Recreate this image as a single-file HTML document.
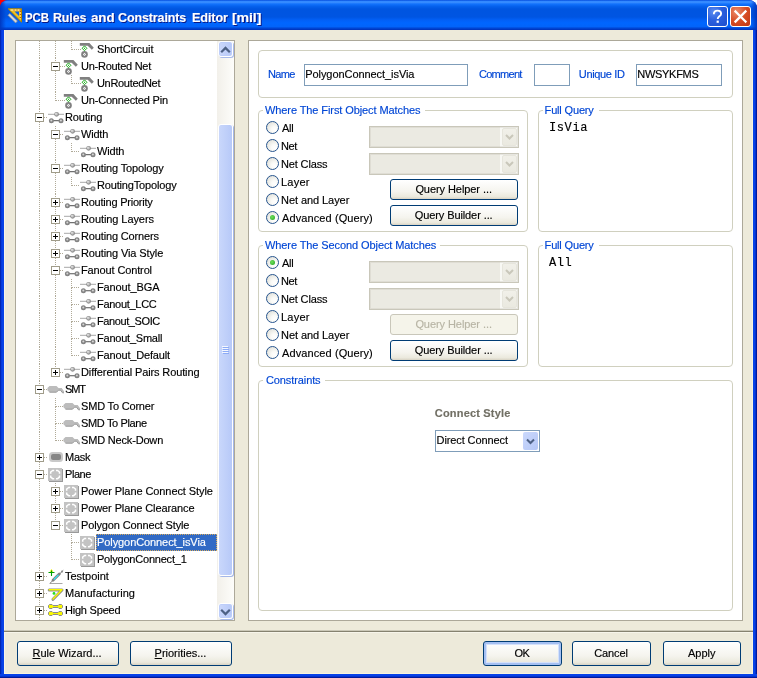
<!DOCTYPE html>
<html><head><meta charset="utf-8"><title>PCB Rules and Constraints Editor [mil]</title>
<style>
*{box-sizing:border-box;margin:0;padding:0}
html,body{width:757px;height:678px;overflow:hidden;background:#fff}
body{font:11px "Liberation Sans",sans-serif;letter-spacing:-0.12px;color:#000;position:relative;-webkit-text-stroke:0.15px currentColor}
i,b,u,s,em{font-style:normal;font-weight:normal;text-decoration:none;display:block;position:absolute}
#win{position:absolute;left:0;top:0;width:757px;height:678px;background:linear-gradient(to right,#00189c 0,#0434cc 1px,#0540ea 2px,#0843e6 3.5px,#0843e6 753.5px,#0540ea 755px,#0434cc 755.5px,#00189c 756.5px);border-radius:8px 8px 0 0;overflow:hidden;will-change:transform}
#bot{position:absolute;left:0;top:674px;width:757px;height:4px;background:linear-gradient(to bottom,#0843e6 0,#0540ea 1.5px,#0434cc 2.500px,#00189c 3.500px)}
#cornerL{position:absolute;left:0;top:0;width:8px;height:8px;background:#f00}
#title{position:absolute;left:0;top:0;width:757px;height:30px;border-radius:8px 8px 0 0;
background:linear-gradient(to bottom,#0046d9 0,#2f86ff 1.2px,#3c8fff 2.2px,#1272fc 4px,#0560ec 6.5px,#0055e0 9px,#0055e2 17px,#0260f6 20px,#0066ff 23px,#0264fa 26.5px,#0048d6 28.2px,#0035be 29.6px)}
#title:before{content:"";position:absolute;left:0;top:0;bottom:0;width:6px;background:linear-gradient(to right,#0038c0,rgba(0,56,192,0))}
#title:after{content:"";position:absolute;right:0;top:0;bottom:0;width:6px;background:linear-gradient(to left,#0038c0,rgba(0,56,192,0))}
.tt{position:absolute;font:bold 13px "Liberation Sans",sans-serif;color:#fff;text-shadow:1px 1px 0 #0a1883;white-space:nowrap}
#body{position:absolute;left:4px;top:30px;width:749px;height:644px;background:#edeada}
.tb{position:absolute;top:6px;width:21px;height:21px;border:1px solid #fff;border-radius:3px}
#help{left:707px;background:radial-gradient(circle at 30% 25%,#5c8cf0 0%,#2a5fde 45%,#1c4dcc 100%)}
#close{left:730px;background:radial-gradient(circle at 30% 25%,#ec8c6c 0%,#d64c24 50%,#bf3513 100%)}
.box{position:absolute;background:#fff;border:1px solid #aca899}
#tree{left:15px;top:40px;width:220px;height:581px;overflow:hidden}
#tin{position:absolute;left:0;top:0;width:201px;height:579px;overflow:hidden}
#right{left:248px;top:40px;width:495px;height:581px}
.v{width:1px;background:repeating-linear-gradient(to bottom,#b0aa98 0,#b0aa98 1px,transparent 1px,transparent 2px)}
.h{height:1px;background:repeating-linear-gradient(to right,#b0aa98 0,#b0aa98 1px,transparent 1px,transparent 2px)}
.bx{width:9px;height:9px;border:1px solid #a09c8a;background:#fff}
.bx u{left:1px;top:3px;width:5px;height:1px;background:#000}
.bx s{left:3px;top:1px;width:1px;height:5px;background:#000}
.ico{position:absolute;width:17px;height:17px}
.ic{display:block}
.t{position:absolute;height:17px;line-height:16px;white-space:nowrap}
.sel{background:#316ac5;color:#fff;padding-left:1px;outline:1px dotted #d6a95c;outline-offset:-1px}
#sb{position:absolute;left:201px;top:0;width:17px;height:579px;background:linear-gradient(to right,#f2f0ea,#fdfdfa)}
.sbb{position:absolute;left:1px;width:15px;height:16px;border:1px solid #fff;border-radius:3px;background:linear-gradient(to right,#cbd8fc,#b6c8f7);box-shadow:inset 0 0 0 1px #bccdfa,1px 1px 0 #a9bbea}
.sbb svg{position:absolute;left:1px;top:4px}
#thumb{position:absolute;left:1px;top:83px;width:15px;height:452px;border:1px solid #fff;border-radius:3px;background:linear-gradient(to right,#c9d7fb,#b7c9f8);box-shadow:1px 1px 0 #a4b7e8}
#grip{position:absolute;left:3px;top:221px;width:6px;height:8px;background:repeating-linear-gradient(to bottom,#f4f7ff 0,#f4f7ff 1px,transparent 1px,transparent 2px)}
#grip2{position:absolute;left:4px;top:222px;width:6px;height:8px;background:repeating-linear-gradient(to bottom,#8cabf6 0,#8cabf6 1px,transparent 1px,transparent 2px)}
.grp{position:absolute;border:1px solid #d0d0bf;border-radius:4px}
.gl{position:absolute;color:#0046d5;background:#fff;padding:0 3px 0 2px;height:14px;line-height:14px;white-space:nowrap}
.gm{position:absolute;height:1px;background:#fff}
.bl{position:absolute;color:#0046d5;white-space:nowrap;line-height:14px}
.inp{position:absolute;height:22px;border:1px solid #7f9db9;background:#fff;line-height:19px;padding-left:2px;white-space:nowrap}
.rd{position:absolute;width:13px;height:13px;border-radius:50%;border:1px solid #26548e;background:radial-gradient(circle at 70% 70%,#ffffff 0%,#fafaf7 30%,#d9d9d1 100%)}
.rd em{left:3px;top:3px;width:5px;height:5px;border-radius:50%;background:radial-gradient(circle at 40% 40%,#6fe05a,#21a121)}
.lb{position:absolute;line-height:15px;white-space:nowrap}
.cbd{position:absolute;width:150px;height:22px;border:1px solid #c9c7ba;box-shadow:inset 0 0 0 1px rgba(201,199,186,.35);background:linear-gradient(to right,#ebeae2 0,#ebeae2 130px,#f8f8f4 130px)}
.cbb{position:absolute;right:1px;top:1px;width:15px;height:18px;border:1px solid #e6e5dc;border-radius:2px;background:linear-gradient(to bottom,#f1f0e9,#eae9e0)}
.cbb svg{position:absolute;left:2px;top:5px}
.btn{position:absolute;border:1px solid #003c74;border-radius:3px;background:linear-gradient(to bottom,#ffffff 0%,#f5f4ee 60%,#ebe9dd 88%,#d8d3c4 100%);text-align:center;line-height:17px;white-space:nowrap;box-sizing:content-box}
.btn.dis{border-color:#c9c7ba;background:#f5f4ea;color:#b8b5a5}
.btn.def{box-shadow:inset 0 0 0 2px #a5c0f2,inset 0 0 0 3px #d4e1fb}
.mono{position:absolute;font:12px "Liberation Mono",monospace;letter-spacing:0.6px;line-height:15px;white-space:nowrap}
#sep{position:absolute;left:4px;top:630px;width:749px;height:3px;background:linear-gradient(to bottom,#cbc8b7 0,#cbc8b7 1px,#85826f 1px,#85826f 2px,#f7f5ea 2px)}
</style></head><body>
<div id="cornerL"></div>
<div id="win">
<div id="title"></div>
<div id="bot"></div>
<svg style="position:absolute;left:7px;top:8px" width="16" height="16" viewBox="0 0 16 16"><path d="M1.200 .800h13.300v13.300z" fill="#f0c020" stroke="#b08800" stroke-width="1"/><path d="M7.500 3.500h4.500v4.500z" fill="#0b5fe8"/><path d="M3.500 2h9.500" stroke="#fff6c0" stroke-width="1"/><path d="M13.300 3v8" stroke="#ffe060" stroke-width="1"/><path d="M6.500 2h7M13.300 3v9" stroke="#a03010" stroke-width="1" stroke-dasharray="1 2"/><path d="M1 7.300l1.800-1.800 7.600 7.600-1.800 1.800z" fill="#d8d8d8" stroke="#909090" stroke-width=".7"/></svg>
<span class="tt" style="left:24.52px;top:9.5px;transform:scaleX(0.8808);transform-origin:0 0;">PCB</span> <span class="tt" style="left:52.94px;top:9.5px;transform:scaleX(0.9559);transform-origin:0 0;">Rules</span> <span class="tt" style="left:90.6px;top:9.5px;transform:scaleX(1.0318);transform-origin:0 0;">and</span> <span class="tt" style="left:118.0px;top:9.5px;transform:scaleX(0.9611);transform-origin:0 0;">Constraints</span> <span class="tt" style="left:191.53px;top:9.5px;transform:scaleX(0.975);transform-origin:0 0;">Editor</span> <span class="tt" style="left:232.31px;top:9.5px;transform:scaleX(1.0885);transform-origin:0 0;">[mil]</span>
<div class="tb" id="help"><svg width="19" height="19" viewBox="0 0 19 19"><path d="M5.800 7.200c0-2.400 1.600-3.600 3.700-3.600s3.600 1.200 3.600 3.100c0 2.600-3.400 2.700-3.400 5.300" fill="none" stroke="#fff" stroke-width="1.900"/><rect x="8.600" y="13.600" width="2.200" height="2.200" fill="#fff"/></svg></div>
<div class="tb" id="close"><svg width="19" height="19" viewBox="0 0 19 19"><path d="M4.500 4.500l10 10M14.500 4.500l-10 10" stroke="#fff" stroke-width="2.300" stroke-linecap="square"/></svg></div>
<div id="body"></div>
<div style="position:absolute;left:4px;top:30px;width:1px;height:644px;background:#f6f4ea"></div>
<div style="position:absolute;left:752px;top:30px;width:1px;height:644px;background:#f7f4de"></div>
<div style="position:absolute;left:4px;top:673px;width:749px;height:1px;background:#f7f4de"></div>

<div class="box" id="tree"><div id="tin">
<i class="v" style="left:23px;top:0px;height:17px"></i>
<i class="v" style="left:39px;top:0px;height:17px"></i>
<i class="v" style="left:55px;top:0px;height:9px"></i>
<i class="h" style="left:56px;top:8px;width:9px"></i>
<span class="ico" style="left:63px;top:0px"><svg class="ic" width="16" height="17" viewBox="0 0 16 17"><path d="M.8 2H10.4L14.8 6.700 12.800 8.750 8.700 4.700H.8z" fill="#808080"/><circle cx="5.500" cy="13.400" r="3.300" fill="#808080"/><path d="M5.500 11.800l1.600 1.600-1.600 1.600-1.600-1.600z" fill="#fff"/><rect x="5" y="12.900" width="1" height="1" fill="#a0a0a0"/><path d="M5.500 4.900l2.400 2.400-2.400 2.400-2.400-2.400z" fill="#fff" stroke="#00a000" stroke-width=".9"/><rect x="5" y="6.800" width="1" height="1" fill="#00a000"/></svg></span>
<span class="t" style="left:81px;top:0px;letter-spacing:-0.091px">ShortCircuit</span>
<i class="v" style="left:23px;top:17px;height:17px"></i>
<i class="v" style="left:39px;top:17px;height:9px"></i>
<i class="v" style="left:39px;top:26px;height:8px"></i>
<i class="h" style="left:40px;top:25px;width:9px"></i>
<b class="bx" style="left:35px;top:21px"><u></u></b>
<span class="ico" style="left:47px;top:17px"><svg class="ic" width="16" height="17" viewBox="0 0 16 17"><path d="M.8 2H10.4L14.8 6.700 12.800 8.750 8.700 4.700H.8z" fill="#808080"/><circle cx="5.500" cy="13.400" r="3.300" fill="#808080"/><path d="M5.500 11.800l1.600 1.600-1.600 1.600-1.600-1.600z" fill="#fff"/><rect x="5" y="12.900" width="1" height="1" fill="#a0a0a0"/><path d="M5.500 4.900l2.400 2.400-2.400 2.400-2.400-2.400z" fill="#fff" stroke="#00a000" stroke-width=".9"/><rect x="5" y="6.800" width="1" height="1" fill="#00a000"/></svg></span>
<span class="t" style="left:65px;top:17px;letter-spacing:-0.258px">Un-Routed Net</span>
<i class="v" style="left:23px;top:34px;height:17px"></i>
<i class="v" style="left:39px;top:34px;height:17px"></i>
<i class="v" style="left:55px;top:34px;height:9px"></i>
<i class="h" style="left:56px;top:42px;width:9px"></i>
<span class="ico" style="left:63px;top:34px"><svg class="ic" width="16" height="17" viewBox="0 0 16 17"><path d="M.8 2H10.4L14.8 6.700 12.800 8.750 8.700 4.700H.8z" fill="#808080"/><circle cx="5.500" cy="13.400" r="3.300" fill="#808080"/><path d="M5.500 11.800l1.600 1.600-1.600 1.600-1.600-1.600z" fill="#fff"/><rect x="5" y="12.900" width="1" height="1" fill="#a0a0a0"/><path d="M5.500 4.900l2.400 2.400-2.400 2.400-2.400-2.400z" fill="#fff" stroke="#00a000" stroke-width=".9"/><rect x="5" y="6.800" width="1" height="1" fill="#00a000"/></svg></span>
<span class="t" style="left:81px;top:34px;letter-spacing:-0.32px">UnRoutedNet</span>
<i class="v" style="left:23px;top:51px;height:17px"></i>
<i class="v" style="left:39px;top:51px;height:9px"></i>
<i class="h" style="left:40px;top:59px;width:9px"></i>
<span class="ico" style="left:47px;top:51px"><svg class="ic" width="16" height="17" viewBox="0 0 16 17"><path d="M.8 2H10.4L14.8 6.700 12.800 8.750 8.700 4.700H.8z" fill="#808080"/><circle cx="5.500" cy="13.400" r="3.300" fill="#808080"/><path d="M5.500 11.800l1.600 1.600-1.600 1.600-1.600-1.600z" fill="#fff"/><rect x="5" y="12.900" width="1" height="1" fill="#a0a0a0"/><path d="M5.500 4.900l2.400 2.400-2.400 2.400-2.400-2.400z" fill="#fff" stroke="#00a000" stroke-width=".9"/><rect x="5" y="6.800" width="1" height="1" fill="#00a000"/></svg></span>
<span class="t" style="left:65px;top:51px;letter-spacing:-0.187px">Un-Connected Pin</span>
<i class="v" style="left:23px;top:68px;height:9px"></i>
<i class="v" style="left:23px;top:77px;height:8px"></i>
<i class="h" style="left:24px;top:76px;width:7px"></i>
<b class="bx" style="left:19px;top:72px"><u></u></b>
<span class="ico" style="left:31px;top:68px"><svg class="ic" width="17" height="17" viewBox="0 0 17 17"><path d="M1 5.300h16" stroke="#a8a8a8" stroke-width="1"/><circle cx="9.600" cy="5.300" r="2.400" fill="#909090"/><circle cx="9.300" cy="5" r="1.500" fill="#c4c4c4"/><circle cx="9" cy="4.700" r=".7" fill="#e4e4e4"/><path d="M4 11.700h10" stroke="#707070" stroke-width="1.200"/><circle cx="4.400" cy="11.700" r="2.500" fill="#848484"/><circle cx="4.300" cy="11.600" r="1" fill="#d4d4d4"/><circle cx="14" cy="11.700" r="2.500" fill="#848484"/><circle cx="13.900" cy="11.600" r="1" fill="#d4d4d4"/></svg></span>
<span class="t" style="left:49px;top:68px;letter-spacing:-0.1px">Routing</span>
<i class="v" style="left:23px;top:85px;height:17px"></i>
<i class="v" style="left:39px;top:85px;height:9px"></i>
<i class="v" style="left:39px;top:94px;height:8px"></i>
<i class="h" style="left:40px;top:93px;width:7px"></i>
<b class="bx" style="left:35px;top:89px"><u></u></b>
<span class="ico" style="left:47px;top:85px"><svg class="ic" width="17" height="17" viewBox="0 0 17 17"><path d="M1 5.300h16" stroke="#a8a8a8" stroke-width="1"/><circle cx="9.600" cy="5.300" r="2.400" fill="#909090"/><circle cx="9.300" cy="5" r="1.500" fill="#c4c4c4"/><circle cx="9" cy="4.700" r=".7" fill="#e4e4e4"/><path d="M4 11.700h10" stroke="#707070" stroke-width="1.200"/><circle cx="4.400" cy="11.700" r="2.500" fill="#848484"/><circle cx="4.300" cy="11.600" r="1" fill="#d4d4d4"/><circle cx="14" cy="11.700" r="2.500" fill="#848484"/><circle cx="13.900" cy="11.600" r="1" fill="#d4d4d4"/></svg></span>
<span class="t" style="left:65px;top:85px;letter-spacing:-0.2px">Width</span>
<i class="v" style="left:23px;top:102px;height:17px"></i>
<i class="v" style="left:39px;top:102px;height:17px"></i>
<i class="v" style="left:55px;top:102px;height:9px"></i>
<i class="h" style="left:56px;top:110px;width:7px"></i>
<span class="ico" style="left:63px;top:102px"><svg class="ic" width="17" height="17" viewBox="0 0 17 17"><path d="M1 5.300h16" stroke="#a8a8a8" stroke-width="1"/><circle cx="9.600" cy="5.300" r="2.400" fill="#909090"/><circle cx="9.300" cy="5" r="1.500" fill="#c4c4c4"/><circle cx="9" cy="4.700" r=".7" fill="#e4e4e4"/><path d="M4 11.700h10" stroke="#707070" stroke-width="1.200"/><circle cx="4.400" cy="11.700" r="2.500" fill="#848484"/><circle cx="4.300" cy="11.600" r="1" fill="#d4d4d4"/><circle cx="14" cy="11.700" r="2.500" fill="#848484"/><circle cx="13.900" cy="11.600" r="1" fill="#d4d4d4"/></svg></span>
<span class="t" style="left:81px;top:102px;letter-spacing:-0.175px">Width</span>
<i class="v" style="left:23px;top:119px;height:17px"></i>
<i class="v" style="left:39px;top:119px;height:9px"></i>
<i class="v" style="left:39px;top:128px;height:8px"></i>
<i class="h" style="left:40px;top:127px;width:7px"></i>
<b class="bx" style="left:35px;top:123px"><u></u></b>
<span class="ico" style="left:47px;top:119px"><svg class="ic" width="17" height="17" viewBox="0 0 17 17"><path d="M1 5.300h16" stroke="#a8a8a8" stroke-width="1"/><circle cx="9.600" cy="5.300" r="2.400" fill="#909090"/><circle cx="9.300" cy="5" r="1.500" fill="#c4c4c4"/><circle cx="9" cy="4.700" r=".7" fill="#e4e4e4"/><path d="M4 11.700h10" stroke="#707070" stroke-width="1.200"/><circle cx="4.400" cy="11.700" r="2.500" fill="#848484"/><circle cx="4.300" cy="11.600" r="1" fill="#d4d4d4"/><circle cx="14" cy="11.700" r="2.500" fill="#848484"/><circle cx="13.900" cy="11.600" r="1" fill="#d4d4d4"/></svg></span>
<span class="t" style="left:65px;top:119px;letter-spacing:-0.133px">Routing Topology</span>
<i class="v" style="left:23px;top:136px;height:17px"></i>
<i class="v" style="left:39px;top:136px;height:17px"></i>
<i class="v" style="left:55px;top:136px;height:9px"></i>
<i class="h" style="left:56px;top:144px;width:7px"></i>
<span class="ico" style="left:63px;top:136px"><svg class="ic" width="17" height="17" viewBox="0 0 17 17"><path d="M1 5.300h16" stroke="#a8a8a8" stroke-width="1"/><circle cx="9.600" cy="5.300" r="2.400" fill="#909090"/><circle cx="9.300" cy="5" r="1.500" fill="#c4c4c4"/><circle cx="9" cy="4.700" r=".7" fill="#e4e4e4"/><path d="M4 11.700h10" stroke="#707070" stroke-width="1.200"/><circle cx="4.400" cy="11.700" r="2.500" fill="#848484"/><circle cx="4.300" cy="11.600" r="1" fill="#d4d4d4"/><circle cx="14" cy="11.700" r="2.500" fill="#848484"/><circle cx="13.900" cy="11.600" r="1" fill="#d4d4d4"/></svg></span>
<span class="t" style="left:81px;top:136px;letter-spacing:-0.164px">RoutingTopology</span>
<i class="v" style="left:23px;top:153px;height:17px"></i>
<i class="v" style="left:39px;top:153px;height:9px"></i>
<i class="v" style="left:39px;top:162px;height:8px"></i>
<i class="h" style="left:40px;top:161px;width:7px"></i>
<b class="bx" style="left:35px;top:157px"><u></u><s></s></b>
<span class="ico" style="left:47px;top:153px"><svg class="ic" width="17" height="17" viewBox="0 0 17 17"><path d="M1 5.300h16" stroke="#a8a8a8" stroke-width="1"/><circle cx="9.600" cy="5.300" r="2.400" fill="#909090"/><circle cx="9.300" cy="5" r="1.500" fill="#c4c4c4"/><circle cx="9" cy="4.700" r=".7" fill="#e4e4e4"/><path d="M4 11.700h10" stroke="#707070" stroke-width="1.200"/><circle cx="4.400" cy="11.700" r="2.500" fill="#848484"/><circle cx="4.300" cy="11.600" r="1" fill="#d4d4d4"/><circle cx="14" cy="11.700" r="2.500" fill="#848484"/><circle cx="13.900" cy="11.600" r="1" fill="#d4d4d4"/></svg></span>
<span class="t" style="left:65px;top:153px;letter-spacing:-0.227px">Routing Priority</span>
<i class="v" style="left:23px;top:170px;height:17px"></i>
<i class="v" style="left:39px;top:170px;height:9px"></i>
<i class="v" style="left:39px;top:179px;height:8px"></i>
<i class="h" style="left:40px;top:178px;width:7px"></i>
<b class="bx" style="left:35px;top:174px"><u></u><s></s></b>
<span class="ico" style="left:47px;top:170px"><svg class="ic" width="17" height="17" viewBox="0 0 17 17"><path d="M1 5.300h16" stroke="#a8a8a8" stroke-width="1"/><circle cx="9.600" cy="5.300" r="2.400" fill="#909090"/><circle cx="9.300" cy="5" r="1.500" fill="#c4c4c4"/><circle cx="9" cy="4.700" r=".7" fill="#e4e4e4"/><path d="M4 11.700h10" stroke="#707070" stroke-width="1.200"/><circle cx="4.400" cy="11.700" r="2.500" fill="#848484"/><circle cx="4.300" cy="11.600" r="1" fill="#d4d4d4"/><circle cx="14" cy="11.700" r="2.500" fill="#848484"/><circle cx="13.900" cy="11.600" r="1" fill="#d4d4d4"/></svg></span>
<span class="t" style="left:65px;top:170px;letter-spacing:-0.077px">Routing Layers</span>
<i class="v" style="left:23px;top:187px;height:17px"></i>
<i class="v" style="left:39px;top:187px;height:9px"></i>
<i class="v" style="left:39px;top:196px;height:8px"></i>
<i class="h" style="left:40px;top:195px;width:7px"></i>
<b class="bx" style="left:35px;top:191px"><u></u><s></s></b>
<span class="ico" style="left:47px;top:187px"><svg class="ic" width="17" height="17" viewBox="0 0 17 17"><path d="M1 5.300h16" stroke="#a8a8a8" stroke-width="1"/><circle cx="9.600" cy="5.300" r="2.400" fill="#909090"/><circle cx="9.300" cy="5" r="1.500" fill="#c4c4c4"/><circle cx="9" cy="4.700" r=".7" fill="#e4e4e4"/><path d="M4 11.700h10" stroke="#707070" stroke-width="1.200"/><circle cx="4.400" cy="11.700" r="2.500" fill="#848484"/><circle cx="4.300" cy="11.600" r="1" fill="#d4d4d4"/><circle cx="14" cy="11.700" r="2.500" fill="#848484"/><circle cx="13.900" cy="11.600" r="1" fill="#d4d4d4"/></svg></span>
<span class="t" style="left:65px;top:187px;letter-spacing:-0.15px">Routing Corners</span>
<i class="v" style="left:23px;top:204px;height:17px"></i>
<i class="v" style="left:39px;top:204px;height:9px"></i>
<i class="v" style="left:39px;top:213px;height:8px"></i>
<i class="h" style="left:40px;top:212px;width:7px"></i>
<b class="bx" style="left:35px;top:208px"><u></u><s></s></b>
<span class="ico" style="left:47px;top:204px"><svg class="ic" width="17" height="17" viewBox="0 0 17 17"><path d="M1 5.300h16" stroke="#a8a8a8" stroke-width="1"/><circle cx="9.600" cy="5.300" r="2.400" fill="#909090"/><circle cx="9.300" cy="5" r="1.500" fill="#c4c4c4"/><circle cx="9" cy="4.700" r=".7" fill="#e4e4e4"/><path d="M4 11.700h10" stroke="#707070" stroke-width="1.200"/><circle cx="4.400" cy="11.700" r="2.500" fill="#848484"/><circle cx="4.300" cy="11.600" r="1" fill="#d4d4d4"/><circle cx="14" cy="11.700" r="2.500" fill="#848484"/><circle cx="13.900" cy="11.600" r="1" fill="#d4d4d4"/></svg></span>
<span class="t" style="left:65px;top:204px;letter-spacing:-0.119px">Routing Via Style</span>
<i class="v" style="left:23px;top:221px;height:17px"></i>
<i class="v" style="left:39px;top:221px;height:9px"></i>
<i class="v" style="left:39px;top:230px;height:8px"></i>
<i class="h" style="left:40px;top:229px;width:7px"></i>
<b class="bx" style="left:35px;top:225px"><u></u></b>
<span class="ico" style="left:47px;top:221px"><svg class="ic" width="17" height="17" viewBox="0 0 17 17"><path d="M1 5.300h16" stroke="#a8a8a8" stroke-width="1"/><circle cx="9.600" cy="5.300" r="2.400" fill="#909090"/><circle cx="9.300" cy="5" r="1.500" fill="#c4c4c4"/><circle cx="9" cy="4.700" r=".7" fill="#e4e4e4"/><path d="M4 11.700h10" stroke="#707070" stroke-width="1.200"/><circle cx="4.400" cy="11.700" r="2.500" fill="#848484"/><circle cx="4.300" cy="11.600" r="1" fill="#d4d4d4"/><circle cx="14" cy="11.700" r="2.500" fill="#848484"/><circle cx="13.900" cy="11.600" r="1" fill="#d4d4d4"/></svg></span>
<span class="t" style="left:65px;top:221px;letter-spacing:-0.131px">Fanout Control</span>
<i class="v" style="left:23px;top:238px;height:17px"></i>
<i class="v" style="left:39px;top:238px;height:17px"></i>
<i class="v" style="left:55px;top:238px;height:9px"></i>
<i class="v" style="left:55px;top:247px;height:8px"></i>
<i class="h" style="left:56px;top:246px;width:7px"></i>
<span class="ico" style="left:63px;top:238px"><svg class="ic" width="17" height="17" viewBox="0 0 17 17"><path d="M1 5.300h16" stroke="#a8a8a8" stroke-width="1"/><circle cx="9.600" cy="5.300" r="2.400" fill="#909090"/><circle cx="9.300" cy="5" r="1.500" fill="#c4c4c4"/><circle cx="9" cy="4.700" r=".7" fill="#e4e4e4"/><path d="M4 11.700h10" stroke="#707070" stroke-width="1.200"/><circle cx="4.400" cy="11.700" r="2.500" fill="#848484"/><circle cx="4.300" cy="11.600" r="1" fill="#d4d4d4"/><circle cx="14" cy="11.700" r="2.500" fill="#848484"/><circle cx="13.900" cy="11.600" r="1" fill="#d4d4d4"/></svg></span>
<span class="t" style="left:81px;top:238px;letter-spacing:-0.122px">Fanout_BGA</span>
<i class="v" style="left:23px;top:255px;height:17px"></i>
<i class="v" style="left:39px;top:255px;height:17px"></i>
<i class="v" style="left:55px;top:255px;height:9px"></i>
<i class="v" style="left:55px;top:264px;height:8px"></i>
<i class="h" style="left:56px;top:263px;width:7px"></i>
<span class="ico" style="left:63px;top:255px"><svg class="ic" width="17" height="17" viewBox="0 0 17 17"><path d="M1 5.300h16" stroke="#a8a8a8" stroke-width="1"/><circle cx="9.600" cy="5.300" r="2.400" fill="#909090"/><circle cx="9.300" cy="5" r="1.500" fill="#c4c4c4"/><circle cx="9" cy="4.700" r=".7" fill="#e4e4e4"/><path d="M4 11.700h10" stroke="#707070" stroke-width="1.200"/><circle cx="4.400" cy="11.700" r="2.500" fill="#848484"/><circle cx="4.300" cy="11.600" r="1" fill="#d4d4d4"/><circle cx="14" cy="11.700" r="2.500" fill="#848484"/><circle cx="13.900" cy="11.600" r="1" fill="#d4d4d4"/></svg></span>
<span class="t" style="left:81px;top:255px;letter-spacing:-0.289px">Fanout_LCC</span>
<i class="v" style="left:23px;top:272px;height:17px"></i>
<i class="v" style="left:39px;top:272px;height:17px"></i>
<i class="v" style="left:55px;top:272px;height:9px"></i>
<i class="v" style="left:55px;top:281px;height:8px"></i>
<i class="h" style="left:56px;top:280px;width:7px"></i>
<span class="ico" style="left:63px;top:272px"><svg class="ic" width="17" height="17" viewBox="0 0 17 17"><path d="M1 5.300h16" stroke="#a8a8a8" stroke-width="1"/><circle cx="9.600" cy="5.300" r="2.400" fill="#909090"/><circle cx="9.300" cy="5" r="1.500" fill="#c4c4c4"/><circle cx="9" cy="4.700" r=".7" fill="#e4e4e4"/><path d="M4 11.700h10" stroke="#707070" stroke-width="1.200"/><circle cx="4.400" cy="11.700" r="2.500" fill="#848484"/><circle cx="4.300" cy="11.600" r="1" fill="#d4d4d4"/><circle cx="14" cy="11.700" r="2.500" fill="#848484"/><circle cx="13.900" cy="11.600" r="1" fill="#d4d4d4"/></svg></span>
<span class="t" style="left:81px;top:272px;letter-spacing:-0.4px">Fanout_SOIC</span>
<i class="v" style="left:23px;top:289px;height:17px"></i>
<i class="v" style="left:39px;top:289px;height:17px"></i>
<i class="v" style="left:55px;top:289px;height:9px"></i>
<i class="v" style="left:55px;top:298px;height:8px"></i>
<i class="h" style="left:56px;top:297px;width:7px"></i>
<span class="ico" style="left:63px;top:289px"><svg class="ic" width="17" height="17" viewBox="0 0 17 17"><path d="M1 5.300h16" stroke="#a8a8a8" stroke-width="1"/><circle cx="9.600" cy="5.300" r="2.400" fill="#909090"/><circle cx="9.300" cy="5" r="1.500" fill="#c4c4c4"/><circle cx="9" cy="4.700" r=".7" fill="#e4e4e4"/><path d="M4 11.700h10" stroke="#707070" stroke-width="1.200"/><circle cx="4.400" cy="11.700" r="2.500" fill="#848484"/><circle cx="4.300" cy="11.600" r="1" fill="#d4d4d4"/><circle cx="14" cy="11.700" r="2.500" fill="#848484"/><circle cx="13.900" cy="11.600" r="1" fill="#d4d4d4"/></svg></span>
<span class="t" style="left:81px;top:289px;letter-spacing:-0.227px">Fanout_Small</span>
<i class="v" style="left:23px;top:306px;height:17px"></i>
<i class="v" style="left:39px;top:306px;height:17px"></i>
<i class="v" style="left:55px;top:306px;height:9px"></i>
<i class="h" style="left:56px;top:314px;width:7px"></i>
<span class="ico" style="left:63px;top:306px"><svg class="ic" width="17" height="17" viewBox="0 0 17 17"><path d="M1 5.300h16" stroke="#a8a8a8" stroke-width="1"/><circle cx="9.600" cy="5.300" r="2.400" fill="#909090"/><circle cx="9.300" cy="5" r="1.500" fill="#c4c4c4"/><circle cx="9" cy="4.700" r=".7" fill="#e4e4e4"/><path d="M4 11.700h10" stroke="#707070" stroke-width="1.200"/><circle cx="4.400" cy="11.700" r="2.500" fill="#848484"/><circle cx="4.300" cy="11.600" r="1" fill="#d4d4d4"/><circle cx="14" cy="11.700" r="2.500" fill="#848484"/><circle cx="13.900" cy="11.600" r="1" fill="#d4d4d4"/></svg></span>
<span class="t" style="left:81px;top:306px;letter-spacing:-0.162px">Fanout_Default</span>
<i class="v" style="left:23px;top:323px;height:17px"></i>
<i class="v" style="left:39px;top:323px;height:9px"></i>
<i class="h" style="left:40px;top:331px;width:7px"></i>
<b class="bx" style="left:35px;top:327px"><u></u><s></s></b>
<span class="ico" style="left:47px;top:323px"><svg class="ic" width="17" height="17" viewBox="0 0 17 17"><path d="M1 5.300h16" stroke="#a8a8a8" stroke-width="1"/><circle cx="9.600" cy="5.300" r="2.400" fill="#909090"/><circle cx="9.300" cy="5" r="1.500" fill="#c4c4c4"/><circle cx="9" cy="4.700" r=".7" fill="#e4e4e4"/><path d="M4 11.700h10" stroke="#707070" stroke-width="1.200"/><circle cx="4.400" cy="11.700" r="2.500" fill="#848484"/><circle cx="4.300" cy="11.600" r="1" fill="#d4d4d4"/><circle cx="14" cy="11.700" r="2.500" fill="#848484"/><circle cx="13.900" cy="11.600" r="1" fill="#d4d4d4"/></svg></span>
<span class="t" style="left:65px;top:323px;letter-spacing:-0.116px">Differential Pairs Routing</span>
<i class="v" style="left:23px;top:340px;height:9px"></i>
<i class="v" style="left:23px;top:349px;height:8px"></i>
<i class="h" style="left:24px;top:348px;width:7px"></i>
<b class="bx" style="left:19px;top:344px"><u></u></b>
<span class="ico" style="left:31px;top:340px"><svg class="ic" width="17" height="17" viewBox="0 0 17 17"><path d="M2.5 5h7l2 2h3.2l2.3 3.2v1.6h-1.6l-2-2.6h-2l-2 2h-7l-2-2v-2.2z" fill="#bcbcbc"/><path d="M2.5 11.2h7l2-2h2l2 2.6h1.5" fill="none" stroke="#9a9a9a" stroke-width="1"/></svg></span>
<span class="t" style="left:49px;top:340px;letter-spacing:-1.1px">SMT</span>
<i class="v" style="left:23px;top:357px;height:17px"></i>
<i class="v" style="left:39px;top:357px;height:9px"></i>
<i class="v" style="left:39px;top:366px;height:8px"></i>
<i class="h" style="left:40px;top:365px;width:7px"></i>
<span class="ico" style="left:47px;top:357px"><svg class="ic" width="17" height="17" viewBox="0 0 17 17"><path d="M2.5 5h7l2 2h3.2l2.3 3.2v1.6h-1.6l-2-2.6h-2l-2 2h-7l-2-2v-2.2z" fill="#bcbcbc"/><path d="M2.5 11.2h7l2-2h2l2 2.6h1.5" fill="none" stroke="#9a9a9a" stroke-width="1"/></svg></span>
<span class="t" style="left:65px;top:357px;letter-spacing:-0.183px">SMD To Corner</span>
<i class="v" style="left:23px;top:374px;height:17px"></i>
<i class="v" style="left:39px;top:374px;height:9px"></i>
<i class="v" style="left:39px;top:383px;height:8px"></i>
<i class="h" style="left:40px;top:382px;width:7px"></i>
<span class="ico" style="left:47px;top:374px"><svg class="ic" width="17" height="17" viewBox="0 0 17 17"><path d="M2.5 5h7l2 2h3.2l2.3 3.2v1.6h-1.6l-2-2.6h-2l-2 2h-7l-2-2v-2.2z" fill="#bcbcbc"/><path d="M2.5 11.2h7l2-2h2l2 2.6h1.5" fill="none" stroke="#9a9a9a" stroke-width="1"/></svg></span>
<span class="t" style="left:65px;top:374px;letter-spacing:-0.355px">SMD To Plane</span>
<i class="v" style="left:23px;top:391px;height:17px"></i>
<i class="v" style="left:39px;top:391px;height:9px"></i>
<i class="h" style="left:40px;top:399px;width:7px"></i>
<span class="ico" style="left:47px;top:391px"><svg class="ic" width="17" height="17" viewBox="0 0 17 17"><path d="M2.5 5h7l2 2h3.2l2.3 3.2v1.6h-1.6l-2-2.6h-2l-2 2h-7l-2-2v-2.2z" fill="#bcbcbc"/><path d="M2.5 11.2h7l2-2h2l2 2.6h1.5" fill="none" stroke="#9a9a9a" stroke-width="1"/></svg></span>
<span class="t" style="left:65px;top:391px;letter-spacing:-0.175px">SMD Neck-Down</span>
<i class="v" style="left:23px;top:408px;height:9px"></i>
<i class="v" style="left:23px;top:417px;height:8px"></i>
<i class="h" style="left:24px;top:416px;width:7px"></i>
<b class="bx" style="left:19px;top:412px"><u></u><s></s></b>
<span class="ico" style="left:31px;top:408px"><svg class="ic" width="16" height="17" viewBox="0 0 16 17"><rect x="2" y="3" width="14" height="10" rx="3.5" fill="#c9c9c9"/><rect x="4" y="5" width="10" height="6" rx="2" fill="#858585"/></svg></span>
<span class="t" style="left:49px;top:408px;letter-spacing:-0.233px">Mask</span>
<i class="v" style="left:23px;top:425px;height:9px"></i>
<i class="v" style="left:23px;top:434px;height:8px"></i>
<i class="h" style="left:24px;top:433px;width:7px"></i>
<b class="bx" style="left:19px;top:429px"><u></u></b>
<span class="ico" style="left:31px;top:425px"><svg class="ic" width="17" height="17" viewBox="0 0 17 17"><rect x="2" y="3" width="14" height="13" fill="#9a9a9a"/><rect x="1" y="2" width="14" height="13" fill="#c3c3c3"/><g fill="none" stroke="#fff" stroke-width="1.500"><path d="M3.700 7.700V6L5.700 4.500H7.200"/><path d="M9 4.500H10.500L12.500 6V7.700"/><path d="M12.500 9.500V11.200L10.500 12.700H9"/><path d="M7.200 12.700H5.700L3.700 11.200V9.500"/></g></svg></span>
<span class="t" style="left:49px;top:425px;letter-spacing:-0.425px">Plane</span>
<i class="v" style="left:23px;top:442px;height:17px"></i>
<i class="v" style="left:39px;top:442px;height:9px"></i>
<i class="v" style="left:39px;top:451px;height:8px"></i>
<i class="h" style="left:40px;top:450px;width:7px"></i>
<b class="bx" style="left:35px;top:446px"><u></u><s></s></b>
<span class="ico" style="left:47px;top:442px"><svg class="ic" width="17" height="17" viewBox="0 0 17 17"><rect x="2" y="3" width="14" height="13" fill="#9a9a9a"/><rect x="1" y="2" width="14" height="13" fill="#c3c3c3"/><g fill="none" stroke="#fff" stroke-width="1.500"><path d="M3.700 7.700V6L5.700 4.500H7.200"/><path d="M9 4.500H10.500L12.500 6V7.700"/><path d="M12.500 9.500V11.200L10.500 12.700H9"/><path d="M7.200 12.700H5.700L3.700 11.200V9.500"/></g></svg></span>
<span class="t" style="left:65px;top:442px;letter-spacing:-0.083px">Power Plane Connect Style</span>
<i class="v" style="left:23px;top:459px;height:17px"></i>
<i class="v" style="left:39px;top:459px;height:9px"></i>
<i class="v" style="left:39px;top:468px;height:8px"></i>
<i class="h" style="left:40px;top:467px;width:7px"></i>
<b class="bx" style="left:35px;top:463px"><u></u><s></s></b>
<span class="ico" style="left:47px;top:459px"><svg class="ic" width="17" height="17" viewBox="0 0 17 17"><rect x="2" y="3" width="14" height="13" fill="#9a9a9a"/><rect x="1" y="2" width="14" height="13" fill="#c3c3c3"/><g fill="none" stroke="#fff" stroke-width="1.500"><path d="M3.700 7.700V6L5.700 4.500H7.200"/><path d="M9 4.500H10.500L12.500 6V7.700"/><path d="M12.500 9.500V11.200L10.500 12.700H9"/><path d="M7.200 12.700H5.700L3.700 11.200V9.500"/></g></svg></span>
<span class="t" style="left:65px;top:459px;letter-spacing:-0.1px">Power Plane Clearance</span>
<i class="v" style="left:23px;top:476px;height:17px"></i>
<i class="v" style="left:39px;top:476px;height:9px"></i>
<i class="h" style="left:40px;top:484px;width:7px"></i>
<b class="bx" style="left:35px;top:480px"><u></u></b>
<span class="ico" style="left:47px;top:476px"><svg class="ic" width="17" height="17" viewBox="0 0 17 17"><rect x="2" y="3" width="14" height="13" fill="#9a9a9a"/><rect x="1" y="2" width="14" height="13" fill="#c3c3c3"/><g fill="none" stroke="#fff" stroke-width="1.500"><path d="M3.700 7.700V6L5.700 4.500H7.200"/><path d="M9 4.500H10.500L12.500 6V7.700"/><path d="M12.500 9.500V11.200L10.500 12.700H9"/><path d="M7.200 12.700H5.700L3.700 11.200V9.500"/></g></svg></span>
<span class="t" style="left:65px;top:476px;letter-spacing:-0.14px">Polygon Connect Style</span>
<i class="v" style="left:23px;top:493px;height:17px"></i>
<i class="v" style="left:55px;top:493px;height:9px"></i>
<i class="v" style="left:55px;top:502px;height:8px"></i>
<i class="h" style="left:56px;top:501px;width:7px"></i>
<span class="ico" style="left:63px;top:493px"><svg class="ic" width="17" height="17" viewBox="0 0 17 17"><rect x="2" y="3" width="14" height="13" fill="#9a9a9a"/><rect x="1" y="2" width="14" height="13" fill="#c3c3c3"/><g fill="none" stroke="#fff" stroke-width="1.500"><path d="M3.700 7.700V6L5.700 4.500H7.200"/><path d="M9 4.500H10.500L12.500 6V7.700"/><path d="M12.500 9.500V11.200L10.500 12.700H9"/><path d="M7.200 12.700H5.700L3.700 11.200V9.500"/></g></svg></span>
<span class="t sel" style="left:80px;top:493px;width:121px;letter-spacing:-0.084px">PolygonConnect_isVia</span>
<i class="v" style="left:23px;top:510px;height:17px"></i>
<i class="v" style="left:55px;top:510px;height:9px"></i>
<i class="h" style="left:56px;top:518px;width:7px"></i>
<span class="ico" style="left:63px;top:510px"><svg class="ic" width="17" height="17" viewBox="0 0 17 17"><rect x="2" y="3" width="14" height="13" fill="#9a9a9a"/><rect x="1" y="2" width="14" height="13" fill="#c3c3c3"/><g fill="none" stroke="#fff" stroke-width="1.500"><path d="M3.700 7.700V6L5.700 4.500H7.200"/><path d="M9 4.500H10.500L12.500 6V7.700"/><path d="M12.500 9.500V11.200L10.500 12.700H9"/><path d="M7.200 12.700H5.700L3.700 11.200V9.500"/></g></svg></span>
<span class="t" style="left:81px;top:510px;letter-spacing:-0.213px">PolygonConnect_1</span>
<i class="v" style="left:23px;top:527px;height:9px"></i>
<i class="v" style="left:23px;top:536px;height:8px"></i>
<i class="h" style="left:24px;top:535px;width:7px"></i>
<b class="bx" style="left:19px;top:531px"><u></u><s></s></b>
<span class="ico" style="left:31px;top:527px"><svg class="ic" width="17" height="17" viewBox="0 0 17 17"><path d="M2.500 15.500h13" stroke="#a8a8a8" stroke-width="1"/><path d="M3 15.300L16.300 2.300" stroke="#808080" stroke-width="1"/><path d="M6 12.300L12.300 6" stroke="#808080" stroke-width="2.800" stroke-linecap="round"/><path d="M6.800 11.500L11.500 6.800" stroke="#30e8f8" stroke-width="1.100"/><circle cx="15" cy="3.600" r="1.100" fill="#909090"/><path d="M4.500 1l1.800 2.800h-3.600z" fill="#f0f000"/><path d="M4.500 2.500v5.500M1.500 4.500h6" stroke="#00a000" stroke-width="1.100"/></svg></span>
<span class="t" style="left:49px;top:527px;letter-spacing:-0.025px">Testpoint</span>
<i class="v" style="left:23px;top:544px;height:9px"></i>
<i class="v" style="left:23px;top:553px;height:8px"></i>
<i class="h" style="left:24px;top:552px;width:7px"></i>
<b class="bx" style="left:19px;top:548px"><u></u><s></s></b>
<span class="ico" style="left:31px;top:544px"><svg class="ic" width="17" height="17" viewBox="0 0 17 17"><path d="M2.200 5h12.800L6 14.300" fill="none" stroke="#8c8c8c" stroke-width="3" stroke-linejoin="round" stroke-linecap="round"/><path d="M2.200 4.800h12.800L6 14" fill="none" stroke="#f8f800" stroke-width="1.400" stroke-linejoin="round" stroke-linecap="round"/><circle cx="7" cy="8.400" r="1.400" fill="#20e020"/></svg></span>
<span class="t" style="left:49px;top:544px;letter-spacing:0.017px">Manufacturing</span>
<i class="v" style="left:23px;top:561px;height:9px"></i>
<i class="v" style="left:23px;top:570px;height:8px"></i>
<i class="h" style="left:24px;top:569px;width:7px"></i>
<b class="bx" style="left:19px;top:565px"><u></u><s></s></b>
<span class="ico" style="left:31px;top:561px"><svg class="ic" width="17" height="17" viewBox="0 0 17 17"><g fill="#f8f800" stroke="#8c8c8c" stroke-width="1"><path d="M2.500 2.5h2.500l1 1h5l1-1h2.500l1 1v2l-1 1h-2.500l-1-1h-5l-1 1h-2.500l-1-1v-2z"/><path d="M2.500 9.5h2.500l1 1h5l1-1h2.500l1 1v2l-1 1h-2.500l-1-1h-5l-1 1h-2.500l-1-1v-2z"/></g></svg></span>
<span class="t" style="left:49px;top:561px;letter-spacing:-0.211px">High Speed</span>
<i class="v" style="left:23px;top:578px;height:4px"></i>
</div>
<div id="sb">
<div class="sbb" style="top:0"><svg width="11" height="8" viewBox="0 0 11 8"><path d="M1.200 6.200L5.500 1.900 9.800 6.200" fill="none" stroke="#4d6185" stroke-width="2.200"/></svg></div>
<div id="thumb"><div id="grip2"></div><div id="grip"></div></div>
<div class="sbb" style="top:562px"><svg width="11" height="8" viewBox="0 0 11 8"><path d="M1.200 1.800L5.500 6.100 9.800 1.800" fill="none" stroke="#4d6185" stroke-width="2.200"/></svg></div>
</div>
</div>

<div class="box" id="right"></div>

<div class="grp" style="left:258px;top:50px;width:475px;height:48px"></div>
<span class="bl" style="left:268.1px;top:67px;letter-spacing:-0.667px;">Name</span>
<div class="inp" style="left:304px;top:64px;width:164px"></div>
<span class="lb" style="left:305.2px;top:67px;letter-spacing:-0.063px;">PolygonConnect_isVia</span>
<span class="bl" style="left:478.9px;top:67px;letter-spacing:-0.7px;">Comment</span>
<div class="inp" style="left:534px;top:64px;width:36px"></div>
<span class="bl" style="left:578.8px;top:67px;letter-spacing:-0.35px;">Unique ID</span>
<div class="inp" style="left:636px;top:64px;width:86px"></div>
<span class="lb" style="left:637.3px;top:67px;letter-spacing:-0.3px;">NWSYKFMS</span>

<div class="grp" style="left:258px;top:110px;width:270px;height:122px"></div>
<span class="gm" style="left:263px;top:110px;width:161.5px"></span>
<span class="bl" style="left:265px;top:103px;letter-spacing:-0.093px;">Where The First Object Matches</span>
<span class="rd" style="left:266px;top:121px"></span>
<span class="lb" style="left:282px;top:121px;letter-spacing:-0.3px;">All</span>
<span class="rd" style="left:266px;top:139px"></span>
<span class="lb" style="left:281px;top:139px;letter-spacing:-0.45px;">Net</span>
<span class="rd" style="left:266px;top:157px"></span>
<span class="lb" style="left:281px;top:157px;letter-spacing:-0.138px;">Net Class</span>
<span class="rd" style="left:266px;top:175px"></span>
<span class="lb" style="left:281px;top:175px;letter-spacing:0.225px;">Layer</span>
<span class="rd" style="left:266px;top:193px"></span>
<span class="lb" style="left:281px;top:193px;letter-spacing:-0.067px;">Net and Layer</span>
<span class="rd" style="left:266px;top:211px"><em></em></span>
<span class="lb" style="left:282px;top:211px;letter-spacing:0.1px;">Advanced (Query)</span>
<div class="cbd" style="left:369px;top:126px"><span class="cbb"><svg width="9" height="6" viewBox="0 0 9 6"><path d="M1 1l3.500 3.500L8 1" fill="none" stroke="#c9c7ba" stroke-width="2"/></svg></span></div>
<div class="cbd" style="left:369px;top:153px"><span class="cbb"><svg width="9" height="6" viewBox="0 0 9 6"><path d="M1 1l3.500 3.500L8 1" fill="none" stroke="#c9c7ba" stroke-width="2"/></svg></span></div>
<div class="btn" style="left:390px;top:179px;width:126px;height:19px"></div>
<span class="lb" style="left:415.4px;top:182px;letter-spacing:-0.073px;">Query Helper ...</span>
<div class="btn" style="left:390px;top:205px;width:126px;height:19px"></div>
<span class="lb" style="left:414.7px;top:208px;letter-spacing:-0.094px;">Query Builder ...</span>
<div class="grp" style="left:538px;top:110px;width:195px;height:122px"></div>
<span class="gm" style="left:543px;top:110px;width:56px"></span>
<span class="bl" style="left:544.6px;top:103px;letter-spacing:-0.167px;">Full Query</span>
<span class="mono" style="left:549px;top:121px">IsVia</span>
<div class="grp" style="left:258px;top:245px;width:270px;height:122px"></div>
<span class="gm" style="left:263px;top:245px;width:177.3px"></span>
<span class="bl" style="left:265px;top:238px;letter-spacing:-0.093px;">Where The Second Object Matches</span>
<span class="rd" style="left:266px;top:256px"><em></em></span>
<span class="lb" style="left:282px;top:256px;letter-spacing:-0.3px;">All</span>
<span class="rd" style="left:266px;top:274px"></span>
<span class="lb" style="left:281px;top:274px;letter-spacing:-0.45px;">Net</span>
<span class="rd" style="left:266px;top:292px"></span>
<span class="lb" style="left:281px;top:292px;letter-spacing:-0.138px;">Net Class</span>
<span class="rd" style="left:266px;top:310px"></span>
<span class="lb" style="left:281px;top:310px;letter-spacing:0.225px;">Layer</span>
<span class="rd" style="left:266px;top:328px"></span>
<span class="lb" style="left:281px;top:328px;letter-spacing:-0.067px;">Net and Layer</span>
<span class="rd" style="left:266px;top:346px"></span>
<span class="lb" style="left:282px;top:346px;letter-spacing:0.1px;">Advanced (Query)</span>
<div class="cbd" style="left:369px;top:261px"><span class="cbb"><svg width="9" height="6" viewBox="0 0 9 6"><path d="M1 1l3.500 3.500L8 1" fill="none" stroke="#c9c7ba" stroke-width="2"/></svg></span></div>
<div class="cbd" style="left:369px;top:288px"><span class="cbb"><svg width="9" height="6" viewBox="0 0 9 6"><path d="M1 1l3.500 3.500L8 1" fill="none" stroke="#c9c7ba" stroke-width="2"/></svg></span></div>
<div class="btn dis" style="left:390px;top:314px;width:126px;height:19px"></div>
<span class="lb" style="left:415.4px;top:317px;letter-spacing:-0.073px;color:#b8b5a5">Query Helper ...</span>
<div class="btn" style="left:390px;top:340px;width:126px;height:19px"></div>
<span class="lb" style="left:414.7px;top:343px;letter-spacing:-0.094px;">Query Builder ...</span>
<div class="grp" style="left:538px;top:245px;width:195px;height:122px"></div>
<span class="gm" style="left:543px;top:245px;width:56px"></span>
<span class="bl" style="left:544.6px;top:238px;letter-spacing:-0.167px;">Full Query</span>
<span class="mono" style="left:549px;top:256px">All</span>

<div class="grp" style="left:258px;top:380px;width:475px;height:231px"></div>
<span class="gm" style="left:263px;top:380px;width:62.30000000000001px"></span>
<span class="bl" style="left:265.9px;top:373px;letter-spacing:-0.09px;">Constraints</span>
<span class="lb" style="left:434.8px;top:406px;letter-spacing:0.183px;font-weight:bold;color:#716f64">Connect Style</span>
<span class="lb" style="left:436.6px;top:433px;letter-spacing:-0.108px;">Direct Connect</span>
<div class="inp" style="left:435px;top:430px;width:105px;height:22px;line-height:19px;background:none"><span style="position:absolute;right:1px;top:1px;width:15px;height:18px;border-radius:2px;background:linear-gradient(to bottom right,#cad8fc,#b5c7f6)"><svg style="position:absolute;left:3px;top:6px" width="9" height="7" viewBox="0 0 9 7"><path d="M1 1.500l3.500 3.500L8 1.500" fill="none" stroke="#4d6185" stroke-width="2"/></svg></span></div>

<div id="sep"></div>
<div class="btn" style="left:17px;top:641px;width:100px;height:23px"></div>
<div class="btn" style="left:130px;top:641px;width:100px;height:23px"></div>
<div class="btn def" style="left:483px;top:641px;width:77px;height:23px"></div>
<div class="btn" style="left:572px;top:641px;width:77px;height:23px"></div>
<div class="btn" style="left:663px;top:641px;width:76px;height:23px"></div>
<span class="lb" style="left:32.5px;top:646px;letter-spacing:0.0px;"><span style="text-decoration:underline">R</span>ule Wizard...</span><span class="lb" style="left:154.6px;top:646px;letter-spacing:-0.017px;"><span style="text-decoration:underline">P</span>riorities...</span><span class="lb" style="left:514.6px;top:646px;letter-spacing:-0.6px;">OK</span><span class="lb" style="left:594.3px;top:646px;letter-spacing:-0.12px;">Cancel</span><span class="lb" style="left:687.9px;top:646px;letter-spacing:0.025px;">Apply</span>
</div>
</body></html>
